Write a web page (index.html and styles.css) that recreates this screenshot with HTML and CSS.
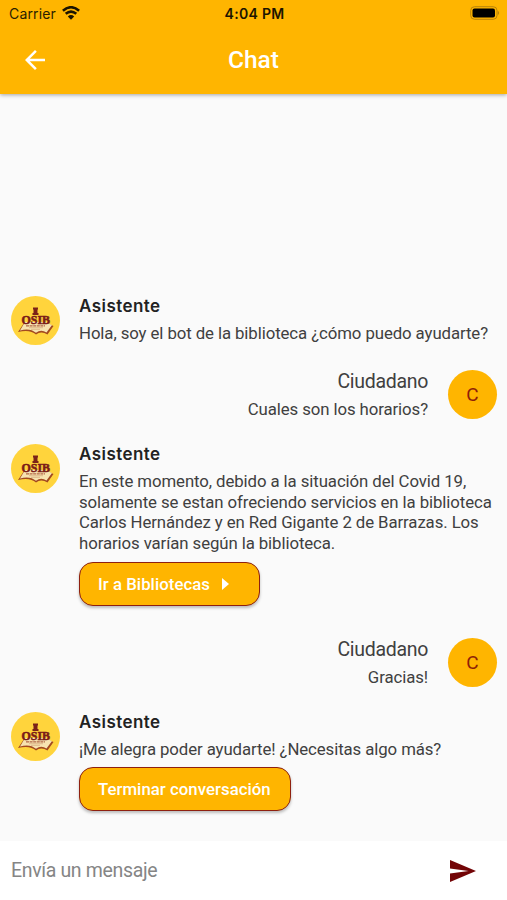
FILE: index.html
```html
<!DOCTYPE html>
<html lang="es">
<head>
<meta charset="utf-8">
<title>Chat</title>
<link rel="stylesheet" href="styles.css">
</head>
<body>
<header class="top">
  <div class="status">
    <div class="carrier"><span>Carrier</span>
      <svg width="18" height="14" viewBox="0 0 18 14" fill="none" stroke="#1c1400" stroke-width="2.600"><path d="M.9 4.700Q9-2.200 17.100 4.700M3.700 7.800Q9 3.400 14.300 7.800"/><path d="M9 13.700L5.800 10.400Q9 7.800 12.200 10.400Z" fill="#1c1400" stroke="none"/></svg>
    </div>
    <div class="clock">4:04 PM</div>
    <svg class="battery" width="31" height="14" viewBox="0 0 31 14"><rect x="1.700" y=".7" width="26.300" height="12.600" rx="3.800" fill="none" stroke="#b98409"/><rect x="3.500" y="2.400" width="22.500" height="9.200" rx="2" fill="#000"/><path d="M28.800 4.800Q31.500 7 28.800 9.200Z" fill="#b98409"/></svg>
  </div>
  <div class="bar">
    <svg class="back" width="20" height="20" viewBox="4 4 16 16"><path d="M20 11H7.830l5.590-5.590L12 4l-8 8 8 8 1.410-1.410L7.830 13H20v-2z" fill="#fff"/></svg>
    <h1>Chat</h1>
  </div>
</header>
<main class="chat">
  <article class="msg">
    <svg class="avatar" viewBox="0 0 49 49">
      <circle cx="24.500" cy="24.500" r="24.500" fill="#ffd43c"/>
      <path d="M13 27L7 36Q19 33 25 38.500Q30 34.500 36.500 38.500L42.500 30L38 28Z" fill="#a34a20"/>
      <path d="M14 26L9 34.500Q19 31.500 25 36.800Q30 33 35.500 36.500L41 29L34 26Z" fill="#f7e3b0"/>
      <path d="M18 31.700h14M20 33.300h9" stroke="#d3a67c" stroke-width=".7"/>
      <path d="M22 11.500h5v2h-.5v3.500h1v2h-6v-2h1v-3.500H22z" fill="#7b2218"/>
      <text x="10.500" y="28" textLength="28.500" lengthAdjust="spacingAndGlyphs" class="logo-text">OSIB</text>
      <path d="M15 29.900h19" stroke="#a04a30" stroke-width="1" stroke-dasharray="3 .6"/>
    </svg>
    <div class="body"><h2>Asistente</h2><p>Hola, soy el bot de la biblioteca ¿cómo puedo ayudarte?</p></div>
  </article>
  <article class="msg mine">
    <div class="body"><h3>Ciudadano</h3><p>Cuales son los horarios?</p></div>
    <div class="avatar initial">C</div>
  </article>
  <article class="msg long">
    <svg class="avatar" viewBox="0 0 49 49">
      <circle cx="24.500" cy="24.500" r="24.500" fill="#ffd43c"/>
      <path d="M13 27L7 36Q19 33 25 38.500Q30 34.500 36.500 38.500L42.500 30L38 28Z" fill="#a34a20"/>
      <path d="M14 26L9 34.500Q19 31.500 25 36.800Q30 33 35.500 36.500L41 29L34 26Z" fill="#f7e3b0"/>
      <path d="M18 31.700h14M20 33.300h9" stroke="#d3a67c" stroke-width=".7"/>
      <path d="M22 11.500h5v2h-.5v3.500h1v2h-6v-2h1v-3.500H22z" fill="#7b2218"/>
      <text x="10.500" y="28" textLength="28.500" lengthAdjust="spacingAndGlyphs" class="logo-text">OSIB</text>
      <path d="M15 29.900h19" stroke="#a04a30" stroke-width="1" stroke-dasharray="3 .6"/>
    </svg>
    <div class="body"><h2>Asistente</h2><p>En este momento, debido a la situación del Covid 19,<br>solamente se estan ofreciendo servicios en la biblioteca<br>Carlos Hernández y en Red Gigante 2 de Barrazas. Los<br>horarios varían según la biblioteca.</p>
      <button class="go">Ir a Bibliotecas<svg width="7" height="12" viewBox="0 0 7 12"><path d="M0 0L7 6L0 12Z" fill="#fff"/></svg></button></div>
  </article>
  <article class="msg mine">
    <div class="body"><h3>Ciudadano</h3><p>Gracias!</p></div>
    <div class="avatar initial">C</div>
  </article>
  <article class="msg last">
    <svg class="avatar" viewBox="0 0 49 49">
      <circle cx="24.500" cy="24.500" r="24.500" fill="#ffd43c"/>
      <path d="M13 27L7 36Q19 33 25 38.500Q30 34.500 36.500 38.500L42.500 30L38 28Z" fill="#a34a20"/>
      <path d="M14 26L9 34.500Q19 31.500 25 36.800Q30 33 35.500 36.500L41 29L34 26Z" fill="#f7e3b0"/>
      <path d="M18 31.700h14M20 33.300h9" stroke="#d3a67c" stroke-width=".7"/>
      <path d="M22 11.500h5v2h-.5v3.500h1v2h-6v-2h1v-3.500H22z" fill="#7b2218"/>
      <text x="10.500" y="28" textLength="28.500" lengthAdjust="spacingAndGlyphs" class="logo-text">OSIB</text>
      <path d="M15 29.900h19" stroke="#a04a30" stroke-width="1" stroke-dasharray="3 .6"/>
    </svg>
    <div class="body"><h2>Asistente</h2><p>¡Me alegra poder ayudarte! ¿Necesitas algo más?</p>
      <button class="end">Terminar conversación</button></div>
  </article>
</main>
<footer class="composer">
  <span>Envía un mensaje</span>
  <svg width="26" height="22" viewBox="2 3 21 18" preserveAspectRatio="none"><path d="M2.010 21L23 12 2.010 3 2 10l15 2-15 2z" fill="#730507"/></svg>
</footer>
</body>
</html>
```
FILE: styles.css
```css
* { box-sizing: border-box; }
body {
  margin: 0;
  width: 507px;
  height: 900px;
  display: flex;
  flex-direction: column;
  overflow: hidden;
  background: #fafafa;
  font-family: Roboto, sans-serif;
  color: #404040;
}
h1, h2, h3, p { margin: 0; }
.logo-text { font: bold 13px "Liberation Serif", serif; fill: #7b1c18; stroke: #7b1c18; stroke-width: .6px; }
.top {
  height: 94px;
  flex: none;
  background: #ffb500;
  box-shadow: 0 1px 4px rgba(0, 0, 0, .35);
}
.status {
  height: 26px;
  padding: 0 7px 0 9px;
  display: grid;
  grid-template-columns: 1fr auto 1fr;
  align-items: center;
  font-family: Inter, sans-serif;
  font-size: 14px;
  color: #2a1e00;
}
.carrier { display: flex; align-items: center; gap: 6px; letter-spacing: .15px; }
.clock { font-weight: 600; letter-spacing: .3px; color: #1c1400; }
.battery { justify-self: end; }
.bar {
  height: 67px;
  display: grid;
  grid-template-columns: 1fr auto 1fr;
  align-items: center;
}
.back { margin-left: 25px; }
.bar h1 { font-size: 24.500px; font-weight: 500; line-height: 28px; padding-top: 1px; color: #fff; }
.chat { flex: 1; display: flex; flex-direction: column; justify-content: flex-end; }
.msg { display: flex; gap: 19px; height: 74px; padding: 0 10px 0 11px; flex: none; }
.msg.long { height: 193.500px; }
.msg.last { height: 129.500px; }
.avatar { width: 49px; height: 49px; flex: none; }
.initial {
  border-radius: 50%;
  background: #ffb500;
  color: #8e1f08;
  font-size: 19px;
  line-height: 49px;
  text-align: center;
}
.mine { justify-content: flex-end; gap: 20px; }
.mine .body { text-align: right; }
h2 { font: 600 17px/21px Inter, sans-serif; letter-spacing: .45px; color: #222; }
h3 { font-size: 19.500px; line-height: 23px; font-weight: 400; letter-spacing: -.3px; }
p { margin-top: 6px; font-size: 16.800px; line-height: 20.700px; letter-spacing: -.09px; white-space: nowrap; }
.mine p { margin-top: 6px; }
button {
  display: flex;
  align-items: center;
  gap: 12px;
  height: 44px;
  margin-top: 8px;
  padding: 0 18px;
  border: 1.500px solid #8e2010;
  border-radius: 14px;
  background: #ffb500;
  box-shadow: 0 2px 3px rgba(0, 0, 0, .25);
  color: #fff;
  font: 500 16.800px Roboto, sans-serif;
  letter-spacing: .03px;
}
.go { width: 181px; }
.end { width: 212px; }
.composer {
  height: 59px;
  flex: none;
  display: flex;
  align-items: center;
  justify-content: space-between;
  padding: 0 31px 0 11px;
  background: #fff;
  color: #858585;
  font-size: 19.500px;
  letter-spacing: -.35px;
}
```
